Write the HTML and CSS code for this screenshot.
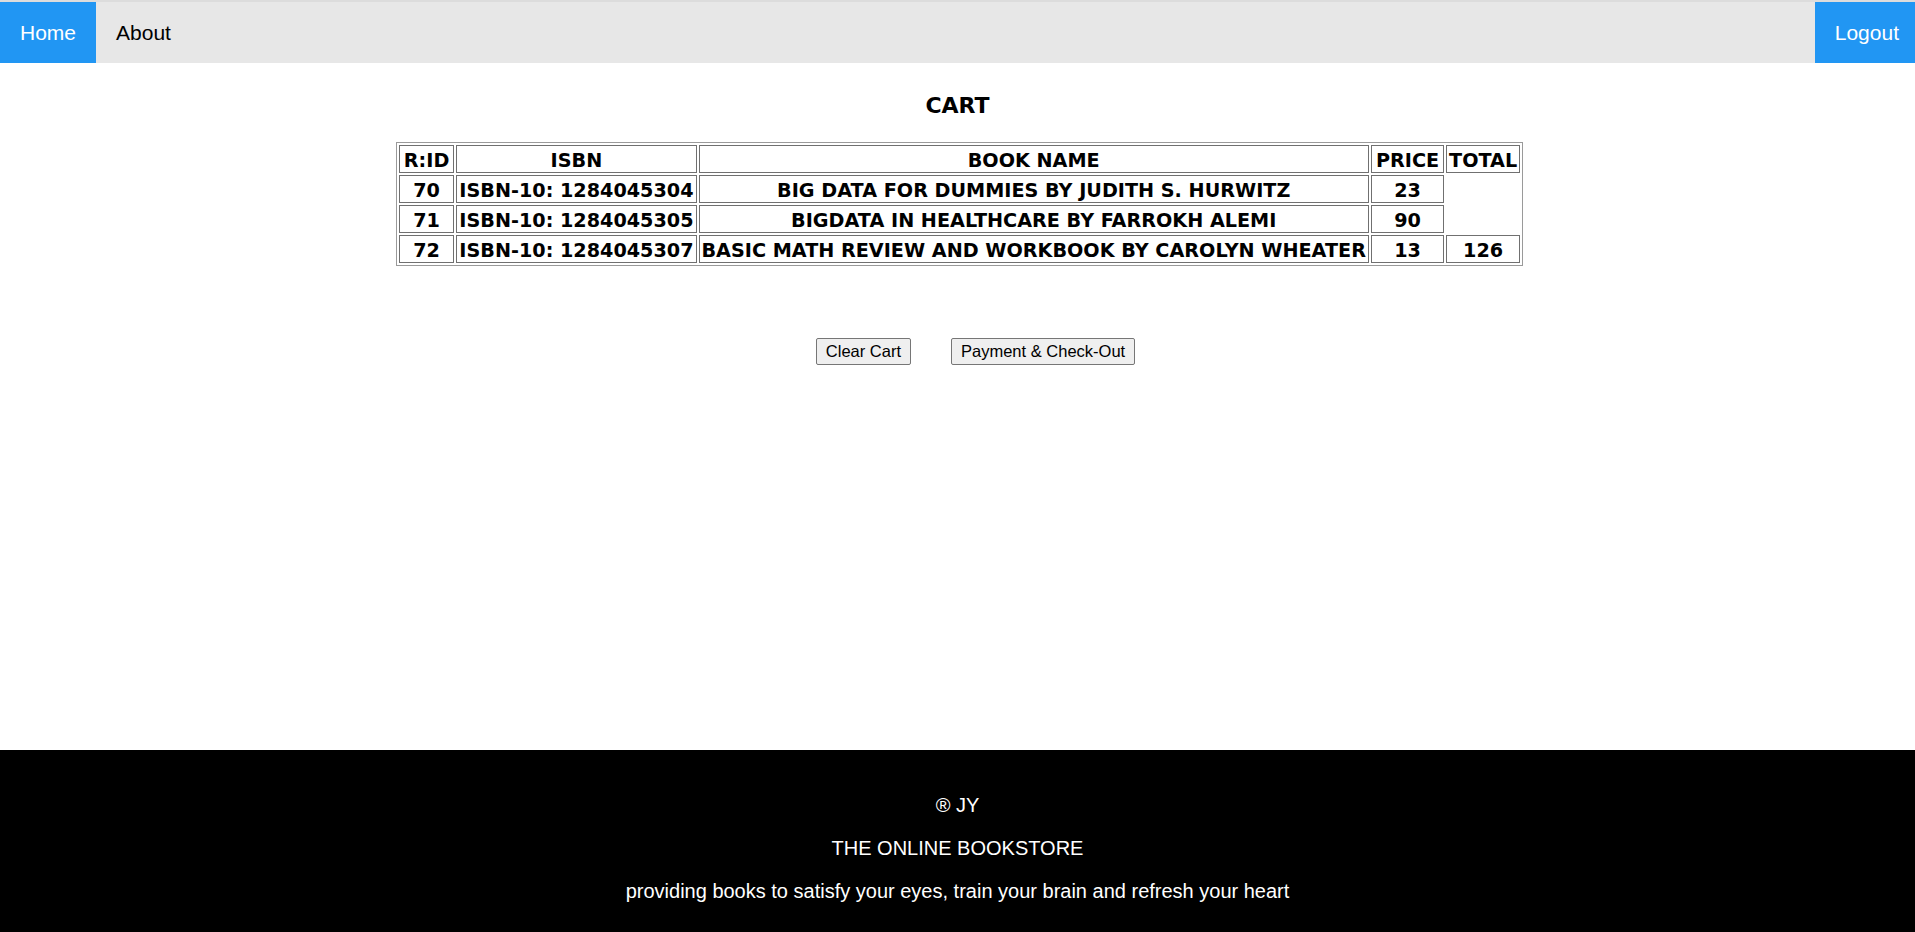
FILE: index.html
```html
<!DOCTYPE html>
<html lang="en">
<head>
<meta charset="utf-8">
<title>Cart</title>
<link rel="stylesheet" href="styles.css">
</head>
<body>
<nav class="topnav">
  <a class="nav-link active" href="#">Home</a>
  <a class="nav-link" href="#">About</a>
  <a class="nav-link active logout" href="#">Logout</a>
</nav>
<main class="content">
  <h3 class="title">CART</h3>
  <table class="cart">
    <tr><td>R:ID</td><td>ISBN</td><td>BOOK NAME</td><td>PRICE</td><td>TOTAL</td></tr>
    <tr><td>70</td><td>ISBN-10: 1284045304</td><td>BIG DATA FOR DUMMIES BY JUDITH S. HURWITZ</td><td>23</td></tr>
    <tr><td>71</td><td>ISBN-10: 1284045305</td><td>BIGDATA IN HEALTHCARE BY FARROKH ALEMI</td><td>90</td></tr>
    <tr><td>72</td><td>ISBN-10: 1284045307</td><td>BASIC MATH REVIEW AND WORKBOOK BY CAROLYN WHEATER</td><td>13</td><td>126</td></tr>
  </table>
  <div class="actions">
    <button class="btn" type="button">Clear Cart</button>
    <button class="btn" type="button">Payment &amp; Check-Out</button>
  </div>
</main>
<footer class="footer">
  <p class="foot-line">&reg; JY</p>
  <p class="foot-line">THE ONLINE BOOKSTORE</p>
  <p class="foot-line">providing books to satisfy your eyes, train your brain and refresh your heart</p>
</footer>
</body>
</html>
```
FILE: styles.css
```css
html, body {
  margin: 0;
  padding: 0;
}
body {
  font-family: "Liberation Sans", Arial, sans-serif;
  min-height: 932px;
  display: flex;
  flex-direction: column;
  background: #fff;
  color: #000;
}
.topnav {
  display: flex;
  background: #e7e7e7;
  border-top: 2px solid #dcdcdc;
  height: 61px;
}
.nav-link {
  display: block;
  padding: 0 20px;
  line-height: 61px;
  font-size: 21px;
  color: #000;
  text-decoration: none;
}
.nav-link.active {
  background: #2196f3;
  color: #fff;
}
.nav-link.logout {
  margin-left: auto;
  padding: 0 16px 0 20px;
}
.content {
  flex: 1;
  display: flex;
  flex-direction: column;
  align-items: center;
}
.title {
  margin: 28px 0 21px;
  font-family: "DejaVu Sans", Verdana, sans-serif;
  font-weight: bold;
  font-size: 22px;
  line-height: 30px;
}
.cart {
  border: 1px solid #9a9a9a;
  border-spacing: 2px;
  margin-left: 4px;
  font-family: "DejaVu Sans", Verdana, sans-serif;
  font-weight: bold;
  font-size: 19.2px;
  line-height: 23px;
}
.cart td {
  border: 1px solid #707070;
  padding: 3px 2px 0;
  text-align: center;
  white-space: nowrap;
}
.cart td:first-child,
.cart td:nth-child(4) {
  padding: 3px 4px 0;
}
.actions {
  display: flex;
  gap: 40px;
  margin-top: 72px;
  padding-left: 36px;
}
.btn {
  font-family: "Liberation Sans", Arial, sans-serif;
  font-size: 16.5px;
  height: 27px;
  padding: 0 9px;
  background: #efefef;
  border: 1px solid #767676;
  border-radius: 2px;
  color: #000;
}
.footer {
  background: #000;
  color: #fff;
  text-align: center;
  padding: 34px 0 20px;
  height: 182px;
  box-sizing: border-box;
}
.foot-line {
  margin: 0;
  line-height: 43px;
  font-family: "Liberation Sans", Arial, sans-serif;
  font-size: 20px;
}
```
